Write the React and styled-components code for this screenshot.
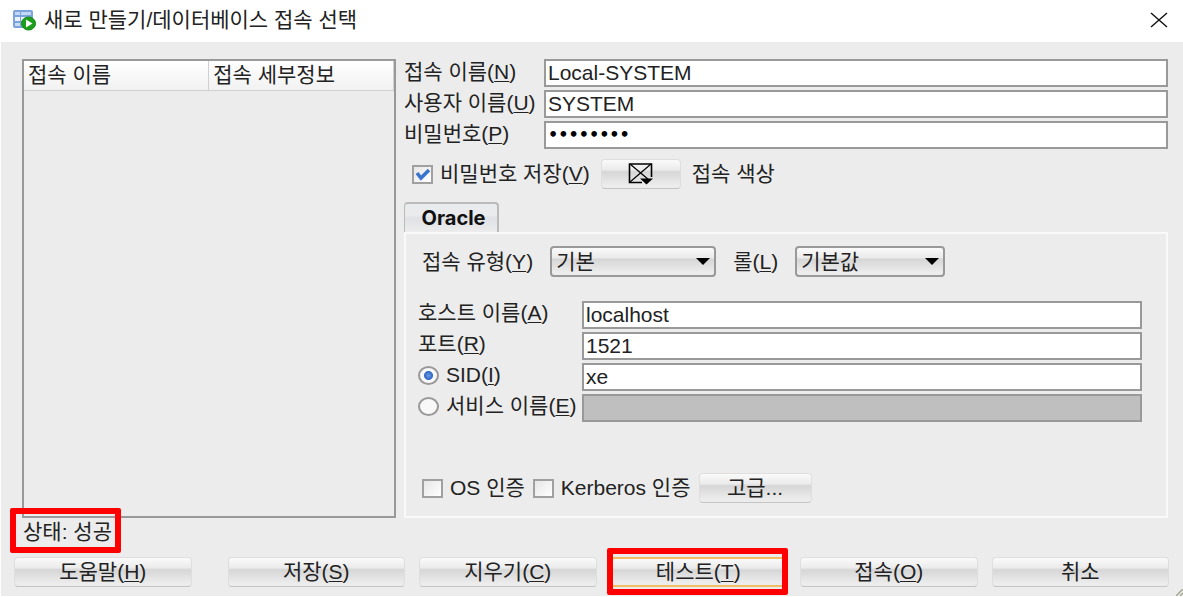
import React, { useState } from 'react'
import styled, { createGlobalStyle, css } from 'styled-components'

const App = () => {
  const [idType, setIdType] = useState('sid')

  return (
    <Dialog>
      <GlobalStyle />
      <TitleBar>
        <DatabaseIcon />
        <Title>새로 만들기/데이터베이스 접속 선택</Title>
        <CloseButton type="button" aria-label="닫기">
          <svg width="18" height="16" viewBox="0 0 18 16" fill="none" stroke="#111" strokeWidth="1.4">
            <path d="M1 1L17 15M17 1L1 15" />
          </svg>
        </CloseButton>
      </TitleBar>

      <Content>
        <ListPane>
          <ConnectionTable>
            <thead>
              <tr>
                <th scope="col">접속 이름</th>
                <th scope="col">접속 세부정보</th>
              </tr>
            </thead>
            <tbody />
          </ConnectionTable>
        </ListPane>

        <FormPane>
          <Fields $label="140px">
            <label htmlFor="name">접속 이름(<u>N</u>)</label>
            <TextInput id="name" defaultValue="Local-SYSTEM" />
            <label htmlFor="user">사용자 이름(<u>U</u>)</label>
            <TextInput id="user" defaultValue="SYSTEM" />
            <label htmlFor="password">비밀번호(<u>P</u>)</label>
            <PasswordInput id="password" type="password" defaultValue="password" />
          </Fields>

          <SaveRow>
            <CheckBox defaultChecked>비밀번호 저장(<u>V</u>)</CheckBox>
            <ColorButton type="button" id="color" aria-label="접속 색상">
              <ColorIcon />
            </ColorButton>
            <label htmlFor="color">접속 색상</label>
          </SaveRow>

          <TabList role="tablist">
            <Tab type="button" role="tab" aria-selected="true">Oracle</Tab>
          </TabList>

          <TabPanel role="tabpanel">
            <TypeRow>
              <label htmlFor="type">접속 유형(<u>Y</u>)</label>
              <SelectBox $width="166px">
                <select id="type" defaultValue="basic">
                  <option value="basic">기본</option>
                </select>
              </SelectBox>
              <label htmlFor="role">롤(<u>L</u>)</label>
              <SelectBox $width="150px">
                <select id="role" defaultValue="default">
                  <option value="default">기본값</option>
                </select>
              </SelectBox>
            </TypeRow>

            <HostFields $label="164px">
              <label htmlFor="host">호스트 이름(<u>A</u>)</label>
              <TextInput id="host" defaultValue="localhost" />
              <label htmlFor="port">포트(<u>R</u>)</label>
              <TextInput id="port" defaultValue="1521" />
              <OptionLabel>
                <Radio name="idType" checked={idType === 'sid'} onChange={() => setIdType('sid')} />
                SID(<u>I</u>)
              </OptionLabel>
              <TextInput aria-label="SID" defaultValue="xe" disabled={idType !== 'sid'} />
              <OptionLabel>
                <Radio name="idType" checked={idType === 'service'} onChange={() => setIdType('service')} />
                서비스 이름(<u>E</u>)
              </OptionLabel>
              <TextInput aria-label="서비스 이름" disabled={idType !== 'service'} />
            </HostFields>

            <AuthRow>
              <CheckBox>OS 인증</CheckBox>
              <CheckBox>Kerberos 인증</CheckBox>
              <AdvancedButton type="button">고급...</AdvancedButton>
            </AuthRow>
          </TabPanel>
        </FormPane>
      </Content>

      <StatusRow>
        <Status role="status">상태: 성공</Status>
      </StatusRow>

      <Footer>
        <HelpButton type="button">도움말(<u>H</u>)</HelpButton>
        <Button type="button">저장(<u>S</u>)</Button>
        <Button type="button">지우기(<u>C</u>)</Button>
        <Marked>
          <Button type="button" $primary>테스트(<u>T</u>)</Button>
        </Marked>
        <Button type="button">접속(<u>O</u>)</Button>
        <Button type="button">취소</Button>
      </Footer>
      <Grip width="7" height="7" viewBox="0 0 7 7" aria-hidden="true">
        <path d="M0 7L7 0M4 7L7 4" stroke="#a6a695" strokeWidth="1.5" />
      </Grip>
    </Dialog>
  )
}

const CheckBox = ({ children, ...props }) => (
  <OptionLabel>
    <CheckHolder>
      <Check {...props} />
      <svg width="16" height="13" viewBox="0 0 16 13" fill="none" stroke="#3b74cf" strokeWidth="3.6">
        <path d="M2 5L6 10L14 2" />
      </svg>
    </CheckHolder>
    <span>{children}</span>
  </OptionLabel>
)

const DatabaseIcon = () => (
  <svg width="24" height="22" viewBox="0 0 24 22" aria-hidden="true">
    <rect x="1" y="1" width="20" height="18" rx="2" fill="#7ba3dc" />
    <path d="M3 3h5v3H3zM9 3h10v3H9z" fill="#c3d8f4" />
    <path d="M3 8h5v4H3zM9 8h10v4H9z" fill="#e9f1fc" />
    <path d="M3 14h5v3H3zM9 14h10v3H9z" fill="#c9dcf5" />
    <ellipse cx="16.5" cy="14.5" rx="7" ry="6.5" fill="#1ca01c" stroke="#0f860f" />
    <path d="M14 10.5L20.5 14.5L14 18.5z" fill="#fff" />
  </svg>
)

const ColorIcon = () => (
  <svg width="26" height="22" viewBox="0 0 26 22" fill="none" stroke="#000">
    <path d="M14 19.5H1.5V1H23.5V14" strokeWidth="1.6" />
    <path d="M2 1L21 17M23 1L2 19" strokeWidth="1.2" />
    <path d="M12 15.5H25L18.5 21.5z" fill="#000" stroke="none" />
  </svg>
)

const GlobalStyle = createGlobalStyle`
  * {
    box-sizing: border-box;
  }

  body {
    margin: 0;
    background: #fff;
  }

  body, button, input, select {
    font-family: 'Liberation Sans', 'Noto Sans CJK KR', sans-serif;
    font-size: 21px;
    line-height: 28px;
    color: #222;
  }

  u {
    text-decoration-thickness: 1px;
    text-underline-offset: 2px;
  }
`

const Dialog = styled.div`
  position: relative;
  display: flex;
  flex-direction: column;
  min-height: 100vh;
  background: #ececec;
  border-left: 1px solid #fff;
  border-bottom: 1px solid #fff;
`

const TitleBar = styled.header`
  display: flex;
  align-items: center;
  height: 42px;
  padding: 0 15px 2px 11px;
  background: #fff;
`

const Title = styled.h1`
  flex: 1;
  margin: 0 0 0 8px;
  font-size: 21px;
  font-weight: 400;
`

const CloseButton = styled.button`
  display: flex;
  padding: 0;
  border: 0;
  background: none;
`

const Content = styled.main`
  flex: 1;
  display: grid;
  grid-template-columns: 374px 1fr;
  gap: 8px;
  padding: 17px 15px 0 21px;
`

const ListPane = styled.section`
  border: 2px solid #999;
`

const ConnectionTable = styled.table`
  width: 100%;
  border-collapse: collapse;
  table-layout: fixed;

  th {
    height: 29px;
    padding: 0 4px;
    border-right: 1px solid #d0d0d0;
    border-bottom: 1px solid #d0d0d0;
    background: linear-gradient(#fff, #f1f1f1);
    font-weight: 400;
    text-align: left;
  }
`

const FormPane = styled.form`
  display: flex;
  flex-direction: column;
  min-width: 0;
`

const Fields = styled.div`
  display: grid;
  grid-template-columns: ${({ $label }) => $label} 1fr;
  grid-auto-rows: 28px;
  gap: 3px 0;
  white-space: nowrap;

  label {
    line-height: 26px;
  }
`

const HostFields = styled(Fields)`
  margin-top: 24px;
  padding: 0 24px 0 12px;

  label {
    height: 24px;
    line-height: 24px;
  }
`

const TextInput = styled.input`
  width: 100%;
  height: 28px;
  padding: 0 2px;
  border: 2px solid #999;
  border-radius: 0;
  background: #fff;
  outline: 0;

  &:disabled {
    background: #bfbfbf;
  }
`

const PasswordInput = styled(TextInput)`
  font-family: 'DejaVu Sans', sans-serif;
  font-size: 16px;
  font-weight: 700;
  color: #000;
`

const SaveRow = styled.div`
  display: flex;
  align-items: center;
  gap: 11px;
  height: 32px;
  margin-top: 9px;
  padding-left: 8px;
`

const OptionLabel = styled.label`
  display: flex;
  align-items: center;
  white-space: nowrap;
`

const CheckHolder = styled.span`
  display: grid;
  place-items: center;
  margin-right: 7px;

  > * {
    grid-area: 1 / 1;
  }

  svg {
    pointer-events: none;
  }

  input:not(:checked) + svg {
    visibility: hidden;
  }
`

const Check = styled.input.attrs({ type: 'checkbox' })`
  appearance: none;
  width: 21px;
  height: 19px;
  margin: 0;
  border: 2px solid #a0a0a0;
  background: linear-gradient(135deg, #e6e6e6, #fff);
`

const Radio = styled.input.attrs({ type: 'radio' })`
  appearance: none;
  width: 21px;
  height: 19px;
  margin: 0 7px 0 0;
  border: 2px solid #999;
  border-radius: 50%;
  background: #f8f8f8;

  &:checked {
    background: radial-gradient(circle, #6a9be8 0, #3268c4 4px, #f8f8f8 5px);
  }
`

const buttonFace = css`
  border: 1px solid #dedede;
  border-bottom-color: #c4c4c4;
  border-radius: 4px;
  background: linear-gradient(#fafafa, #ebebeb 35%, #d6d6d6 42%, #ececec 90%);
`

const Button = styled.button`
  ${buttonFace}
  flex: 1 1 0;
  height: 30px;
  padding: 0;
  line-height: 26px;

  ${({ $primary }) => $primary && css`
    border-color: #f2bd63;
    border-width: 2px 1px;
    line-height: 24px;
  `}
`

const ColorButton = styled(Button)`
  display: flex;
  flex: 0 0 80px;
  align-items: center;
  justify-content: center;
`

const AdvancedButton = styled(Button)`
  flex: 0 0 113px;
`

const HelpButton = styled(Button)`
  margin-right: 22px;
`

const TabList = styled.div`
  display: flex;
  margin-top: 12px;
`

const Tab = styled.button`
  width: 95px;
  height: 30px;
  padding: 0 0 0 5px;
  border: 1px solid #bbb;
  border-width: 2px 2px 0 1px;
  border-radius: 4px 4px 0 0;
  background: linear-gradient(#eaebec 40%, #dfe1e4 50%, #ececec);
  font-family: Inter, sans-serif;
  font-size: 20px;
  font-weight: 700;
  color: #111;
`

const TabPanel = styled.section`
  flex: 1;
  display: flex;
  flex-direction: column;
  padding: 12px 0 13px;
  border: 2px solid #f9f9f9;
`

const TypeRow = styled.div`
  display: flex;
  align-items: center;
  gap: 17px;
  padding-left: 16px;
  white-space: nowrap;
`

const SelectBox = styled.div`
  position: relative;
  width: ${({ $width }) => $width};

  select {
    ${buttonFace}
    display: block;
    appearance: none;
    width: 100%;
    height: 31px;
    padding: 0 4px;
    border: 2px solid #999;
    border-radius: 4px;
    line-height: 27px;
  }

  &::after {
    content: '';
    position: absolute;
    top: 12px;
    right: 6px;
    border: 7px solid transparent;
    border-top-color: #000;
    border-bottom: 0;
    pointer-events: none;
  }
`

const AuthRow = styled.div`
  display: flex;
  align-items: center;
  gap: 8px;
  margin-top: auto;
  padding-left: 16px;
`

// Red frame drawn over the part to point at
const redFrame = css`
  content: '';
  position: absolute;
  border: 6px solid #f00;
  border-radius: 2px;
  pointer-events: none;
`

const StatusRow = styled.div`
  padding: 0 22px;
`

const Status = styled.output`
  position: relative;
  display: inline-block;

  &::after {
    ${redFrame}
    inset: -10px -9px -7px -13px;
  }
`

const Footer = styled.footer`
  display: flex;
  gap: 14px;
  padding: 11px 14px 9px 13px;
`

const Marked = styled.div`
  position: relative;
  display: flex;
  flex: 1 1 0;

  &::after {
    ${redFrame}
    inset: -9px -2px -8px -4px;
  }
`

const Grip = styled.svg`
  position: absolute;
  right: 0;
  bottom: 0;
`

export default App
